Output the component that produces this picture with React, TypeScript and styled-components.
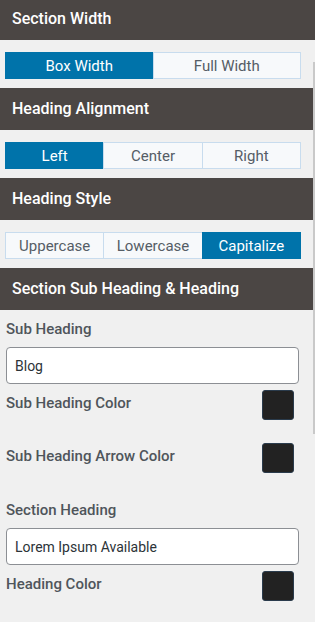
import styled, { createGlobalStyle } from "styled-components";

const GlobalStyle = createGlobalStyle`
  html, body {
    margin: 0;
    padding: 0;
    background: #f0f0f0;
    font-family: Roboto, "Liberation Sans", sans-serif;
  }
`;

const Panel = styled.div`
  position: relative;
  width: 315px;
  height: 622px;
  overflow: hidden;
  background: #f0f0f0;
`;

// content is scrolled up by a couple of pixels in the panel
const Scroller = styled.div`
  margin-top: -2px;
`;

const ScrollThumb = styled.div`
  position: absolute;
  right: 0;
  top: 62px;
  width: 2px;
  height: 372px;
  background: #c9c9c9;
`;

const Header = styled.div`
  height: 42px;
  display: flex;
  align-items: center;
  padding: 0 12px 2px;
  box-sizing: border-box;
  background: #4b4644;
  color: #ffffff;
  font-size: 16px;
  font-weight: 500;
`;

const ButtonGroup = styled.div`
  display: flex;
  margin: 12px 14px 9px 5px;
  height: 27px;
`;

const GroupButton = styled.button<{ $active?: boolean }>`
  flex: 1;
  height: 27px;
  margin: 0;
  padding: 0;
  border: 1px solid ${(p) => (p.$active ? "#0073aa" : "#c8dcee")};
  margin-left: -1px;
  background: ${(p) => (p.$active ? "#0073aa" : "#f7f9fb")};
  color: ${(p) => (p.$active ? "#ffffff" : "#555d66")};
  font-family: Roboto, "Liberation Sans", sans-serif;
  font-size: 15px;
  &:first-child {
    margin-left: 0;
  }
`;

const Fields = styled.div`
  padding: 10px 16px 0 6px;
`;

const Label = styled.div`
  color: #4f555b;
  font-size: 15px;
  font-weight: 500;
  line-height: 18px;
`;

const TextInput = styled.input`
  display: block;
  box-sizing: border-box;
  width: 293px;
  height: 37px;
  margin: 9px 0 6px;
  padding: 0 8px;
  border: 1px solid #8c8f94;
  border-radius: 4px;
  background: #ffffff;
  color: #2c3338;
  font-family: Roboto, "Liberation Sans", sans-serif;
  font-size: 14px;
`;

const ColorRow = styled.div<{ $gap?: number }>`
  display: flex;
  align-items: flex-start;
  justify-content: space-between;
  padding-right: 5px;
  margin-bottom: ${(p) => p.$gap ?? 23}px;
`;

const Swatch = styled.div`
  width: 32px;
  height: 30px;
  box-sizing: border-box;
  border: 1px solid #2a3b4c;
  border-radius: 3px;
  background: #222222;
`;

const SwatchLabel = styled(Label)`
  padding-top: 4px;
`;

const Segmented = ({
  options,
  active,
}: {
  options: string[];
  active: number;
}) => (
  <ButtonGroup>
    {options.map((o, i) => (
      <GroupButton key={o} $active={i === active}>
        {o}
      </GroupButton>
    ))}
  </ButtonGroup>
);

export default function App() {
  return (
    <Panel>
      <GlobalStyle />
      <Scroller>
        <Header>Section Width</Header>
        <Segmented options={["Box Width", "Full Width"]} active={0} />
        <Header>Heading Alignment</Header>
        <Segmented options={["Left", "Center", "Right"]} active={0} />
        <Header>Heading Style</Header>
        <Segmented options={["Uppercase", "Lowercase", "Capitalize"]} active={2} />
        <Header>Section Sub Heading &amp; Heading</Header>
        <Fields>
          <Label>Sub Heading</Label>
          <TextInput defaultValue="Blog" />
          <ColorRow>
            <SwatchLabel>Sub Heading Color</SwatchLabel>
            <Swatch />
          </ColorRow>
          <ColorRow $gap={28}>
            <SwatchLabel>Sub Heading Arrow Color</SwatchLabel>
            <Swatch />
          </ColorRow>
          <Label>Section Heading</Label>
          <TextInput defaultValue="Lorem Ipsum Available" />
          <ColorRow>
            <SwatchLabel>Heading Color</SwatchLabel>
            <Swatch />
          </ColorRow>
        </Fields>
      </Scroller>
      <ScrollThumb />
    </Panel>
  );
}
